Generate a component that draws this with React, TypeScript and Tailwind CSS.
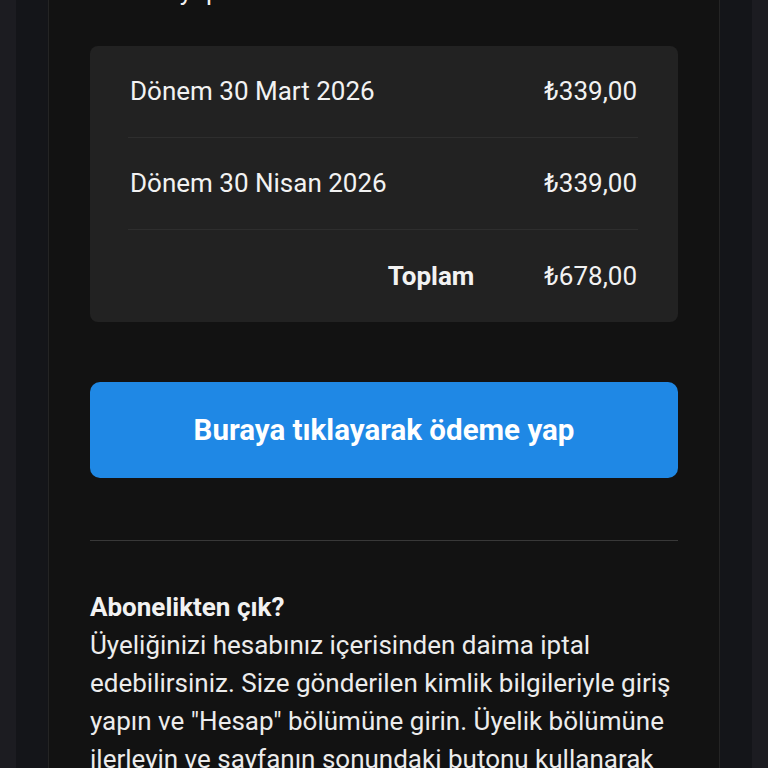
import React from 'react';

const rows = [
  { label: 'Dönem 30 Mart 2026', amount: '₺339,00' },
  { label: 'Dönem 30 Nisan 2026', amount: '₺339,00' },
];

export default function App() {
  return (
    <div className="h-screen overflow-hidden bg-[#1c1c21] px-4 font-['Roboto','Noto_Sans',sans-serif] text-[#f2f2f2]">
      <div className="h-full bg-[#141519] px-8">
        <div className="flow-root h-full border-x border-[#242424] bg-[#121212] px-[41px]">
          <p className="-mt-[28px] text-[26px] leading-[38px]">Hemen yapılacak ödemeler:</p>

          <div className="mt-[36px] rounded-lg bg-[#222222] pl-[38px] pr-[40px]">
            {rows.map((r) => (
              <div key={r.label} className="flex h-[92px] items-center justify-between border-b border-[#2e2e2e] pl-[2px] pr-px text-[26px]">
                <span>{r.label}</span>
                <span>{r.amount}</span>
              </div>
            ))}
            <div className="flex h-[92px] items-center justify-end gap-[70px] pr-px text-[26px]">
              <span className="font-bold">Toplam</span>
              <span>₺678,00</span>
            </div>
          </div>

          <button className="mt-[60px] flex h-[96px] w-full items-center justify-center rounded-[10px] bg-[#1f88e5] text-[29.5px] font-bold text-white">
            Buraya tıklayarak ödeme yap
          </button>

          <div className="mt-[62px] h-px bg-[#383838]" />

          <h3 className="mt-[47px] text-[26px] font-bold leading-[38px]">Abonelikten çık?</h3>
          <p className="text-[26px] leading-[38px] text-[#ececec]">
            Üyeliğinizi hesabınız içerisinden daima iptal
            <br />
            edebilirsiniz. Size gönderilen kimlik bilgileriyle giriş
            <br />
            yapın ve "Hesap" bölümüne girin. Üyelik bölümüne
            <br />
            ilerleyin ve sayfanın sonundaki butonu kullanarak
            <br />
            aboneliğinizi iptal edin.
          </p>
        </div>
      </div>
    </div>
  );
}
